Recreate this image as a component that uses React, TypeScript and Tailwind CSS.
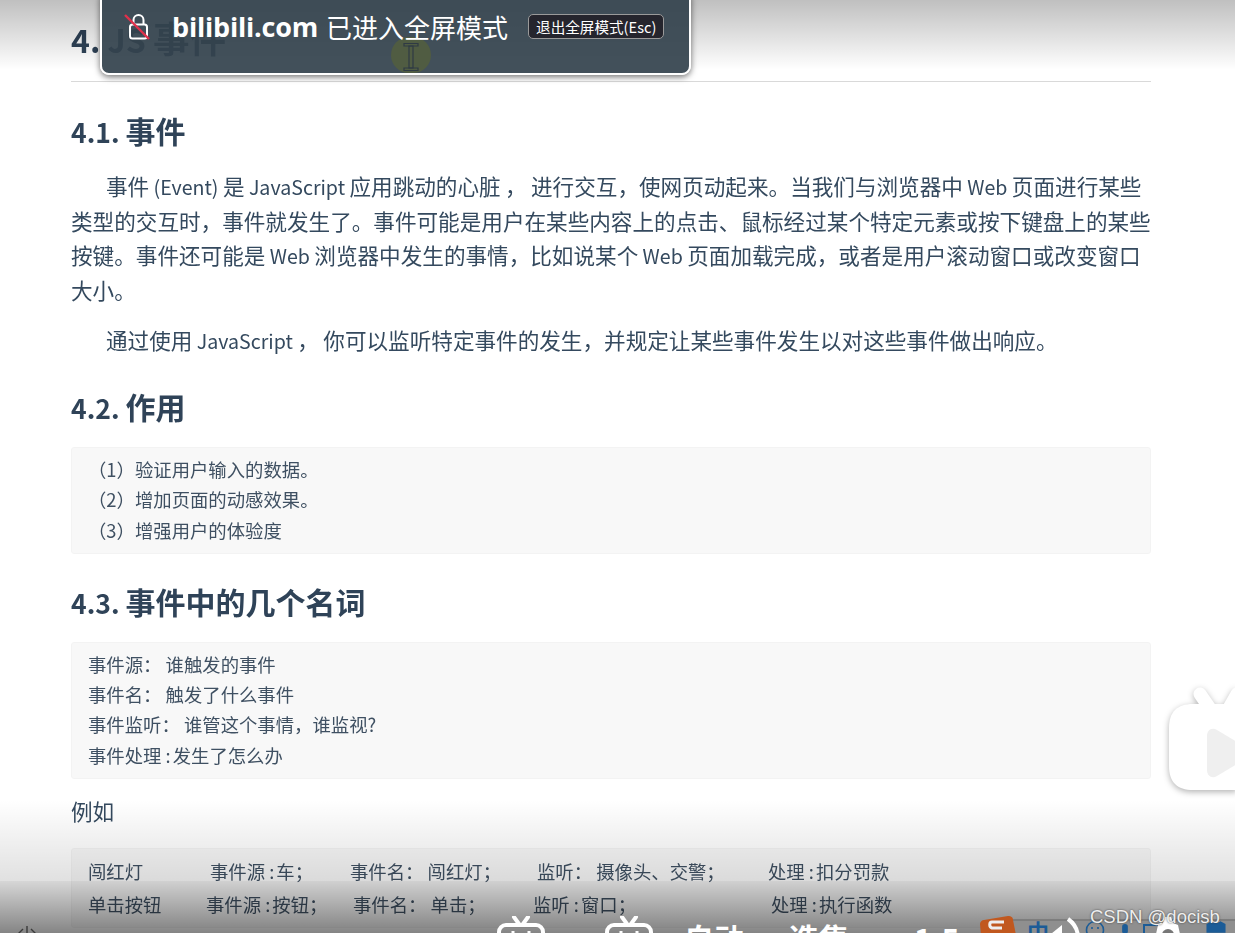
function L({ children }: { children: string }) {
  return <span className="text-[19.6px] leading-none">{children}</span>;
}

function N({ children }: { children: string }) {
  return <span className="text-[26.5px] leading-none font-semibold">{children}</span>;
}

function C() {
  return <span className="mr-[2px]"> :</span>;
}

export default function App() {
  const h2 = "text-[30px] leading-[40px] font-bold text-[#2f4358]";
  const block = "bg-[#f8f8f8] border border-[#f3f3f3] rounded-[3px] px-[16px] pt-[6px] pb-[7.5px] text-[18.36px] leading-[30.4px] text-[#3f5062]";
  const p = "text-[21.6px] leading-[34.56px] text-[#34495e] whitespace-nowrap";
  return (
    <div className="relative w-[1235px] h-[933px] overflow-hidden bg-white font-['Noto_Sans_CJK_SC',sans-serif]">
      <main className="pl-[71px] w-[1151px] flex flex-col blur-[0.3px]">
        <h1 className="h-[82px] pt-[14px] text-[36.5px] leading-[48px] font-bold text-[#2f4358] border-b border-[#d9d9d9]">
          <span className="text-[32px] leading-none font-semibold">4. JS </span>事件
        </h1>
        <h2 className={`${h2} mt-[28px]`}><N>4.1. </N>事件</h2>
        <p className={`${p} mt-[19px] indent-[35px]`}>
          事件<L> (Event) </L>是<L> JavaScript </L>应用跳动的心脏<L> </L>，<L> </L>进行交互，使网页动起来。当我们与浏览器中<L> Web </L>页面进行某些
          <br />
          类型的交互时，事件就发生了。事件可能是用户在某些内容上的点击、鼠标经过某个特定元素或按下键盘上的某些
          <br />
          按键。事件还可能是<L> Web </L>浏览器中发生的事情，比如说某个<L> Web </L>页面加载完成，或者是用户滚动窗口或改变窗口
          <br />
          大小。
        </p>
        <p className={`${p} mt-[16px] indent-[35px]`}>
          通过使用<L> JavaScript </L>，<L> </L>你可以监听特定事件的发生，并规定让某些事件发生以对这些事件做出响应。
        </p>
        <h2 className={`${h2} mt-[28px]`}><N>4.2. </N>作用</h2>
        <div className={`${block} mt-[21px]`}>
          <div>（1）验证用户输入的数据。</div>
          <div>（2）增加页面的动感效果。</div>
          <div>（3）增强用户的体验度</div>
        </div>
        <h2 className={`${h2} mt-[27px]`}><N>4.3. </N>事件中的几个名词</h2>
        <div className={`${block} mt-[21px]`}>
          <div>事件源： 谁触发的事件</div>
          <div>事件名： 触发了什么事件</div>
          <div>事件监听： 谁管这个事情，谁监视?</div>
          <div>事件处理<C />发生了怎么办</div>
        </div>
        <p className="mt-[15px] text-[21.6px] leading-[34.56px] text-[#34495e]">例如</p>
        <div className={`${block} mt-[20px]`}>
          <div className="flex whitespace-nowrap mt-[1px]">
            <span className="w-[122px]">闯红灯</span>
            <span className="w-[140px]">事件源<C />车；</span>
            <span className="w-[187px]">事件名： 闯红灯；</span>
            <span className="w-[231px]">监听： 摄像头、交警；</span>
            <span>处理<C />扣分罚款</span>
          </div>
          <div className="flex whitespace-nowrap mt-[2px]">
            <span className="w-[118px]">单击按钮</span>
            <span className="w-[147px]">事件源<C />按钮；</span>
            <span className="w-[180px]">事件名： 单击；</span>
            <span className="w-[238px]">监听<C />窗口；</span>
            <span>处理<C />执行函数</span>
          </div>
        </div>
      </main>

      {/* video chrome fades */}
      <div className="absolute inset-x-0 top-0 h-[70px] bg-linear-to-b from-black/25 to-black/0 pointer-events-none" />
      <div className="absolute inset-x-0 top-[800px] h-[81px] bg-linear-to-b from-black/0 to-black/12 pointer-events-none" />
      <div className="absolute inset-x-0 top-[881px] h-[52px] bg-linear-to-b from-black/16 to-black/48 pointer-events-none" />

      {/* fullscreen toast */}
      <div className="absolute left-[100px] top-[-10px] w-[591px] h-[85px] rounded-[9px] border-2 border-white bg-[#34434e]/93 shadow-[0_2px_6px_rgba(0,0,0,0.55)] flex items-center pl-[22px] pb-[12px] text-white">
        {/* pointer highlight */}
        <div className="absolute left-[289px] top-[45px] w-[40px] h-[36px] rounded-[20px] bg-[#505c42]" />
        <svg viewBox="0 0 18 30" className="absolute left-[300px] top-[50px] w-[18px] h-[30px]" fill="none" stroke="#2f3a44" strokeWidth="1.2">
          <path d="M7 4h4v22H7z" />
          <path d="M2 1.5h14V4H2zM2 26h14v2.5H2z" />
        </svg>
        <svg viewBox="0 0 28 30" className="w-[28px] h-[30px]" fill="none">
          <rect x="6" y="12.5" width="17" height="14" rx="2.5" stroke="#fff" strokeWidth="2" />
          <path d="M9.5 12V8a5 5 0 0 1 10 0v4" stroke="#fff" strokeWidth="2" />
          <path d="M1 3 L25 27" stroke="#e0314b" strokeWidth="2.4" />
        </svg>
        <span className="ml-[20px] text-[27px] font-bold leading-none font-['Open_Sans',sans-serif] tracking-[-0.2px]">bilibili.com</span>
        <span className="relative ml-[8px] text-[26px] leading-none">已进入全屏模式</span>
        <span className="ml-[20px] px-[7px] h-[25px] flex items-center rounded-[5px] border border-[#9a9a9a] bg-[#25252d] text-[14.6px]">退出全屏模式(Esc)</span>
      </div>

      {/* floating tv */}
      <svg viewBox="0 0 70 106" className="absolute left-[1167px] top-[686px] w-[70px] h-[106px] drop-shadow-[0_2px_3px_rgba(0,0,0,0.3)]">
        <path d="M33 8 L44 24" stroke="#fff" strokeWidth="13" strokeLinecap="round" />
        <path d="M70 8 L62 22" stroke="#fff" strokeWidth="13" strokeLinecap="round" />
        <path d="M26 18 H70 V104 H26 C10 104 2 96 2 80 V42 C2 26 10 18 26 18 Z" fill="#fff" />
        <path d="M40 50 C40 44 45 41 50 44 L70 56 V78 L50 90 C45 93 40 90 40 84 Z" fill="#efefef" />
      </svg>

      {/* player controls, cut off by the frame */}
      <svg viewBox="0 0 24 18" className="absolute left-[15px] top-[925px] w-[24px] h-[18px]" fill="none" stroke="#3a3a3a" strokeWidth="1.4">
        <path d="M2 10 L8 4 M22 10 L16 4 M12 1v10" />
      </svg>
      <svg viewBox="0 0 48 30" className="absolute left-[497px] top-[916px] w-[48px] h-[30px]" fill="none" stroke="#fff" strokeWidth="4">
        <path d="M17 1 L22 8 M31 1 L26 8" strokeLinecap="round" />
        <rect x="2" y="9" width="44" height="24" rx="7" />
        <path d="M16 15v4M32 15v4" strokeWidth="3" />
      </svg>
      <svg viewBox="0 0 48 30" className="absolute left-[605px] top-[916px] w-[48px] h-[30px]" fill="none" stroke="#fff" strokeWidth="4">
        <path d="M17 1 L22 8 M31 1 L26 8" strokeLinecap="round" />
        <rect x="2" y="9" width="44" height="24" rx="7" />
        <path d="M16 15v4M32 15v4" strokeWidth="3" />
      </svg>
      <span className="absolute left-[684px] top-[917px] text-[30px] leading-[40px] font-bold text-white whitespace-nowrap">自动</span>
      <span className="absolute left-[789px] top-[917px] text-[30px] leading-[40px] font-bold text-white whitespace-nowrap">选集</span>
      <span className="absolute left-[914px] top-[918px] text-[30px] leading-[40px] font-bold text-white whitespace-nowrap">1.5</span>

      {/* input method bar */}
      <div className="absolute left-[1012px] right-0 top-[919px] h-[14px] border-t-2 border-[#7d7d7d] bg-[#8f8f8f]" />
      <svg viewBox="0 0 38 20" className="absolute left-[978px] top-[915px] w-[38px] h-[20px]">
        <path d="M6 5 L30 1 C33 1 35 2 35 5 L38 20 H3 L2 9 C2 7 4 5 6 5 Z" fill="#c1581f" />
        <path d="M26 7 H14 C11 7 11 12 14 13 H24" fill="none" stroke="#eee" strokeWidth="3" />
      </svg>
      <span className="absolute left-[1027px] top-[915px] text-[22px] leading-[30px] font-bold text-[#1c5c97]">中</span>
      <svg viewBox="0 0 20 14" className="absolute left-[1084px] top-[920px] w-[22px] h-[14px]" fill="none" stroke="#1c5c97" strokeWidth="1.6">
        <circle cx="10" cy="10" r="8.5" />
        <path d="M7 7v2M13 7v2" />
      </svg>
      <svg viewBox="0 0 12 14" className="absolute left-[1119px] top-[924px] w-[12px] h-[10px]">
        <rect x="2" y="0" width="8" height="14" rx="4" fill="#1c5c97" />
      </svg>
      <svg viewBox="0 0 24 10" className="absolute left-[1143px] top-[924px] w-[24px] h-[10px]" fill="none" stroke="#1c5c97" strokeWidth="2">
        <rect x="1" y="1" width="22" height="12" />
      </svg>
      <svg viewBox="0 0 30 16" className="absolute left-[1205px] top-[921px] w-[22px] h-[12px]">
        <path d="M2 4 L9 0 C12 3 18 3 21 0 L28 4 V16 H2 Z" fill="#1c5c97" />
      </svg>
      <svg viewBox="0 0 38 22" className="absolute left-[1044px] top-[916px] w-[38px] h-[22px]" fill="none">
        <path d="M2 22 L18 9 V22 Z" fill="#fff" />
        <path d="M24 3 C31 8 34 14 34 22" stroke="#fff" strokeWidth="4" />
      </svg>
      <svg viewBox="0 0 36 18" className="absolute left-[1150px] top-[916px] w-[36px] h-[18px]" fill="none">
        <path d="M6 18 L8 9 L13 7 L15 1 H21 L23 7 L28 9 L30 18 Z" fill="#fff" />
        <circle cx="18" cy="19" r="6" fill="#777" />
      </svg>

      <span className="absolute left-[1090px] top-[905px] text-[18.5px] leading-[24px] font-['Liberation_Sans',sans-serif] text-[#eeeeee] [text-shadow:0_0_2px_rgba(50,50,50,0.9)] whitespace-nowrap">
        CSDN @docisb
      </span>
    </div>
  );
}
